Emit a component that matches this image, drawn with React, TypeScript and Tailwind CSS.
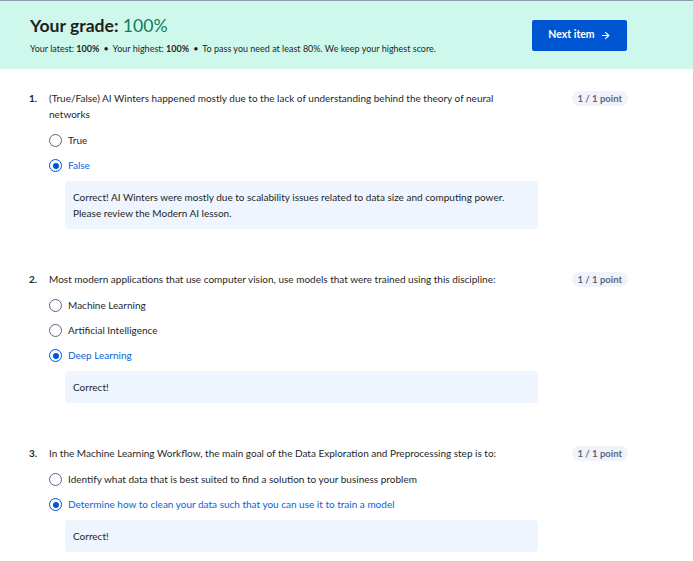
import React from "react";
import { ArrowRight } from "lucide-react";

type Question = {
  num: number;
  text: string;
  options: string[];
  selected: number;
  feedback: string[];
};

const questions: Question[] = [
  {
    num: 1,
    text: "(True/False) AI Winters happened mostly due to the lack of understanding behind the theory of neural networks",
    options: ["True", "False"],
    selected: 1,
    feedback: [
      "Correct! AI Winters were mostly due to scalability issues related to data size and computing power.",
      "Please review the Modern AI lesson.",
    ],
  },
  {
    num: 2,
    text: "Most modern applications that use computer vision, use models that were trained using this discipline:",
    options: ["Machine Learning", "Artificial Intelligence", "Deep Learning"],
    selected: 2,
    feedback: ["Correct!"],
  },
  {
    num: 3,
    text: "In the Machine Learning Workflow, the main goal of the Data Exploration and Preprocessing step is to:",
    options: [
      "Identify what data that is best suited to find a solution to your business problem",
      "Determine how to clean your data such that you can use it to train a model",
    ],
    selected: 1,
    feedback: ["Correct!"],
  },
];

const Radio = ({ checked }: { checked: boolean }) =>
  checked ? (
    <span className="flex h-[13px] w-[13px] shrink-0 items-center justify-center rounded-full border-[1.5px] border-[#0056d2]">
      <span className="h-[6px] w-[6px] rounded-full bg-[#0056d2]" />
    </span>
  ) : (
    <span className="h-[13px] w-[13px] shrink-0 rounded-full border-[1.5px] border-[#5b6780]" />
  );

const QuestionBlock = ({ q }: { q: Question }) => (
  <div className="flex items-start">
    <div className="w-[20px] shrink-0 text-[10px] font-bold leading-[16px] text-[#1f1f1f]">
      {q.num}.
    </div>
    <div className="w-[489px] shrink-0">
      <div className="w-[472px] text-[10px] leading-[16px] text-[#1f1f1f]">{q.text}</div>
      <div className="mt-[6px] flex flex-col">
        {q.options.map((opt, i) => (
          <div key={opt} className="flex h-[25px] items-center gap-[6px]">
            <Radio checked={i === q.selected} />
            <span
              className={
                i === q.selected
                  ? "text-[10px] text-[#0b5fd6]"
                  : "text-[10px] text-[#1f1f1f]"
              }
            >
              {opt}
            </span>
          </div>
        ))}
      </div>
      <div className="ml-[16px] mt-[3px] rounded-[4px] bg-[#eef5fe] px-[8px] py-[8px] text-[10px] leading-[16px] text-[#1f1f1f]">
        {q.feedback.map((line) => (
          <div key={line}>{line}</div>
        ))}
      </div>
    </div>
    <div className="ml-auto mt-[1px] rounded-full bg-[#f0f3f9] px-[6px] py-[1px] text-[9.5px] font-bold leading-[13px] text-[#5b6780]">
      1 / 1 point
    </div>
  </div>
);

export default function App() {
  return (
    <div
      className="min-h-[561px] w-[693px] bg-white"
      style={{ fontFamily: "Lato, 'Noto Sans', sans-serif" }}
    >
      <div className="flex h-[69px] items-center border-t border-[#8b9bb0] bg-[#cff8ec] pl-[30px] pr-[66px]">
        <div className="flex-1">
          <div className="text-[17.6px] font-bold leading-[22px] text-[#1f1f1f]">
            Your grade: <span className="font-normal text-[#137a57]">100%</span>
          </div>
          <div className="mt-[6px] text-[9px] leading-[12px] text-[#1f1f1f]">
            Your latest: <span className="font-bold">100%</span>
            <span className="mx-[4px]">•</span>
            Your highest: <span className="font-bold">100%</span>
            <span className="mx-[4px]">•</span>
            To pass you need at least 80%. We keep your highest score.
          </div>
        </div>
        <button
          type="button"
          className="flex h-[31px] w-[95px] items-center justify-center gap-[5px] rounded-[2px] bg-[#0056d2] text-[10.5px] font-bold text-white"
        >
          Next item
          <ArrowRight size={11} strokeWidth={2.5} />
        </button>
      </div>

      <div className="flex flex-col gap-[42px] pl-[29px] pr-[65px] pt-[21px]">
        {questions.map((q) => (
          <QuestionBlock key={q.num} q={q} />
        ))}
      </div>
    </div>
  );
}
